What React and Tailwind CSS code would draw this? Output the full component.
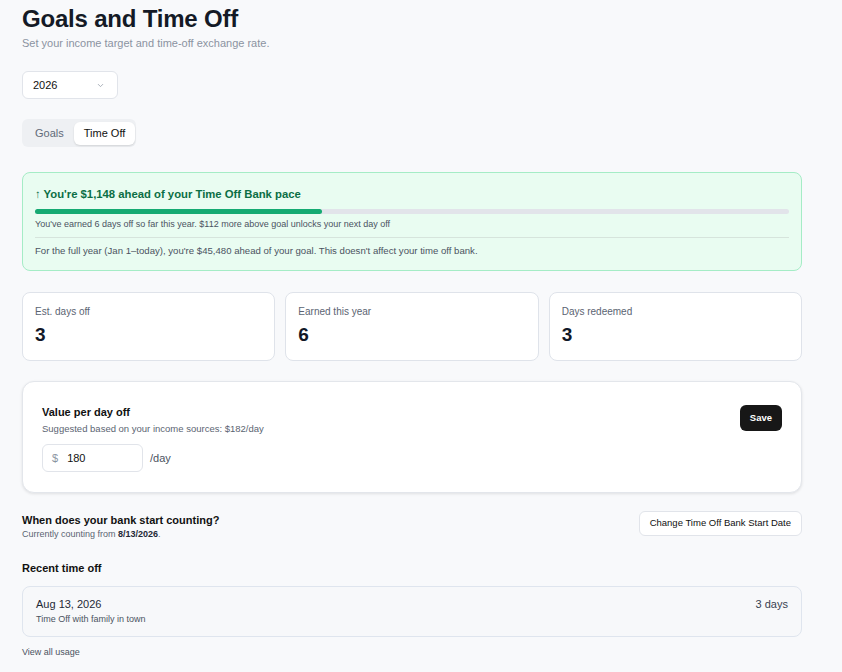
import React from "react";

const font = { fontFamily: '"Liberation Sans", Arial, sans-serif' };

function Stat({ label, value }) {
  return (
    <div className="flex-1 rounded-lg border border-[#dfe3ea] bg-white px-[12px] pt-[12px] pb-[13px]">
      <div className="text-[10px] leading-[14px] text-[#5b6472]">{label}</div>
      <div className="mt-[4px] text-[19px] font-bold leading-[24px] text-[#111827]">{value}</div>
    </div>
  );
}

export default function App() {
  return (
    <div style={font} className="min-h-[672px] w-[842px] bg-[#f8f9fb] pl-[22px] pr-[40px] pt-[5px] pb-[10px] text-[#111827]">
      <h1 className="text-[24px] font-bold leading-[28px] tracking-[-0.2px] text-[#141a26]">Goals and Time Off</h1>
      <p className="mt-[3px] text-[11px] leading-[14px] text-[#8b93a1]">Set your income target and time-off exchange rate.</p>

      <button className="mt-[21px] flex h-[28px] w-[96px] items-center justify-between rounded-md border border-[#e1e4ea] bg-white pl-[10px] pr-[12px] text-[11px] text-[#111]">
        <span>2026</span>
        <svg width="9" height="9" viewBox="0 0 24 24" fill="none" stroke="#9aa1ad" strokeWidth="2.2" strokeLinecap="round" strokeLinejoin="round"><path d="m6 9 6 6 6-6" /></svg>
      </button>

      <div className="mt-[20px] flex h-[28px] w-fit items-center rounded-md bg-[#eef0f3] pl-[3px] pr-[1px]">
        <div className="px-[10px] text-[11px] leading-[23px] text-[#616a78]">Goals</div>
        <div className="rounded-md bg-white px-[10px] text-[11px] leading-[23px] text-[#111] shadow-[0_1px_2px_rgba(0,0,0,0.12)]">Time Off</div>
      </div>

      <div className="mt-[25px] rounded-lg border border-[#a5ecc6] bg-[#e9fcf1] px-[12px] pt-[13px] pb-[13px]">
        <div className="text-[11.3px] font-bold leading-[16px] text-[#0b6e45]">↑ You're $1,148 ahead of your Time Off Bank pace</div>
        <div className="mt-[7px] h-[5px] w-full rounded-full bg-[#e2e4ea]">
          <div className="h-[5px] w-[38%] rounded-full bg-[#15aa72]"></div>
        </div>
        <div className="mt-[4px] text-[9px] leading-[13px] text-[#4b5361]">You've earned 6 days off so far this year. $112 more above goal unlocks your next day off</div>
        <div className="mt-[6px] border-t border-[#d6e4dc] pt-[6px] text-[9.6px] leading-[13px] text-[#4b5361]">For the full year (Jan 1–today), you're $45,480 ahead of your goal. This doesn't affect your time off bank.</div>
      </div>

      <div className="mt-[21px] flex gap-[10px]">
        <Stat label="Est. days off" value="3" />
        <Stat label="Earned this year" value="6" />
        <Stat label="Days redeemed" value="3" />
      </div>

      <div className="mt-[20px] rounded-xl border border-[#e3e6eb] bg-white px-[19px] pt-[23px] pb-[20px] shadow-[0_1px_3px_rgba(0,0,0,0.10)]">
        <div className="flex items-start justify-between">
          <div>
            <div className="text-[11px] font-bold leading-[14px] text-[#111]">Value per day off</div>
            <div className="mt-[4px] text-[9.5px] leading-[12px] text-[#5b6472]">Suggested based on your income sources: $182/day</div>
            <div className="mt-[9px] flex items-center gap-[7px]">
              <div className="flex h-[28px] w-[101px] items-center rounded-md border border-[#e1e4ea] bg-white px-[9px] text-[11px]">
                <span className="text-[#8b93a1]">$</span>
                <span className="ml-[9px] text-[#111]">180</span>
              </div>
              <span className="text-[11px] text-[#4b5361]">/day</span>
            </div>
          </div>
          <button className="h-[26px] rounded-md bg-[#171717] px-[10px] text-[9.5px] font-semibold text-white">Save</button>
        </div>
      </div>

      <div className="mt-[18px] flex items-start justify-between">
        <div className="pt-[2px]">
          <div className="text-[11px] font-bold leading-[14px] text-[#111]">When does your bank start counting?</div>
          <div className="mt-[1px] text-[9px] leading-[12px] text-[#5b6472]">Currently counting from <span className="font-bold text-[#1f2937]">8/13/2026</span>.</div>
        </div>
        <button className="h-[25px] rounded-md border border-[#e1e4ea] bg-white px-[10px] text-[9.5px] text-[#111]">Change Time Off Bank Start Date</button>
      </div>

      <div className="mt-[21px] text-[11px] font-bold leading-[14px] text-[#111]">Recent time off</div>
      <div className="mt-[11px] flex items-start justify-between rounded-lg border border-[#dfe5ee] bg-[#f7f8fa] px-[13px] pt-[10px] pb-[11px]">
        <div>
          <div className="text-[11px] leading-[14px] text-[#1f2937]">Aug 13, 2026</div>
          <div className="mt-[2px] text-[9px] leading-[12px] text-[#4b5361]">Time Off with family in town</div>
        </div>
        <div className="text-[11px] leading-[14px] text-[#374151]">3 days</div>
      </div>
      <div className="mt-[9px] text-[9px] leading-[12px] text-[#4b5361]">View all usage</div>
    </div>
  );
}
